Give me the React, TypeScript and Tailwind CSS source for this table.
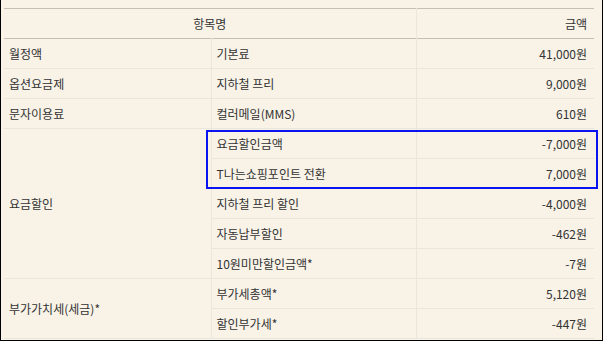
type Row = { group?: string; span?: number; item: string; amount: string };

const rows: Row[] = [
  { group: '월정액', span: 1, item: '기본료', amount: '41,000원' },
  { group: '옵션요금제', span: 1, item: '지하철 프리', amount: '9,000원' },
  { group: '문자이용료', span: 1, item: '컬러메일(MMS)', amount: '610원' },
  { group: '요금할인', span: 5, item: '요금할인금액', amount: '-7,000원' },
  { item: 'T나는쇼핑포인트 전환', amount: '7,000원' },
  { item: '지하철 프리 할인', amount: '-4,000원' },
  { item: '자동납부할인', amount: '-462원' },
  { item: '10원미만할인금액*', amount: '-7원' },
  { group: '부가가치세(세금)*', span: 2, item: '부가세총액*', amount: '5,120원' },
  { item: '할인부가세*', amount: '-447원' },
];

export default function App() {
  return (
    <div
      className="relative w-[603px] h-[341px] bg-[#f8f2e7] border-x border-b border-black pl-[3px] pt-[8px] text-[12px] text-[#333333]"
      style={{ fontFamily: '"Noto Sans CJK KR", "Noto Sans", sans-serif' }}
    >
      <table className="w-[590px] border-collapse table-fixed">
        <colgroup>
          <col className="w-[207px]" />
          <col className="w-[205px]" />
          <col className="w-[178px]" />
        </colgroup>
        <thead>
          <tr className="h-[30px] border-y border-[#c4c0b8]">
            <th colSpan={2} className="font-normal text-center border-r border-[#ebe6dc]">
              항목명
            </th>
            <th className="font-normal text-right pr-[7px]">금액</th>
          </tr>
        </thead>
        <tbody>
          {rows.map((r, i) => (
            <tr key={i} className="h-[30px] border-b border-[#ebe6dc]">
              {r.group && (
                <td rowSpan={r.span} className="pl-[5px] border-r border-[#ebe6dc] align-middle">
                  {r.group}
                </td>
              )}
              <td className="pl-[5px] border-r border-[#ebe6dc]">{r.item}</td>
              <td className="text-right pr-[7px]">{r.amount}</td>
            </tr>
          ))}
        </tbody>
      </table>
      {/* highlight around the discount rows */}
      <div className="absolute left-[205px] top-[130px] w-[392px] h-[59px] border-2 border-[#0a14f0]" />
    </div>
  );
}
